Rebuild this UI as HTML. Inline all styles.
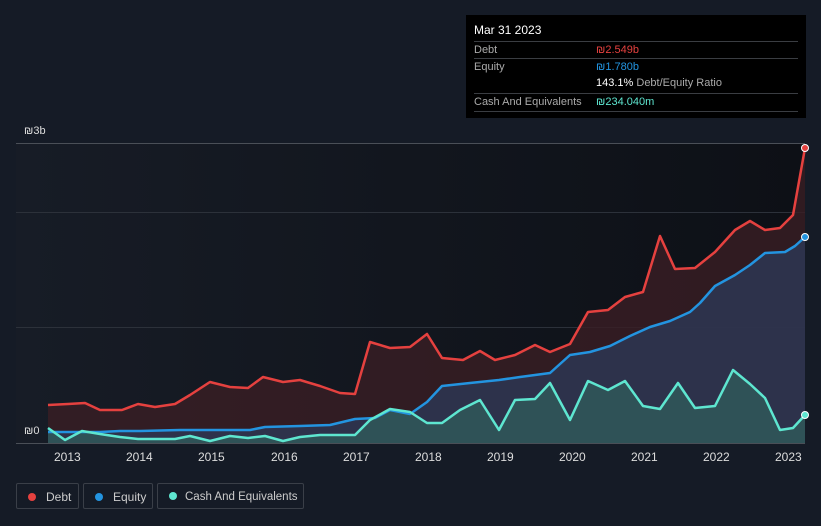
<!DOCTYPE html><html><head><style>
html,body{margin:0;width:821px;height:526px;overflow:hidden}
body{background:#151b26;font-family:"Liberation Sans",sans-serif;position:relative}
.tt{position:absolute;left:466px;top:15px;width:340px;height:103px;background:#000;color:#fff;font-size:11px}
.tt .r{position:absolute;left:8px;right:8px;border-top:1px solid #3a3d42;height:17px;line-height:17px;color:#aaa}
.tt .r span{position:absolute;left:122px}
.leg{position:absolute;top:483px;height:26px;border:1px solid #3a3f48;border-radius:2px;color:#ccc;font-size:12px;line-height:26px;box-sizing:border-box;white-space:nowrap}
.leg i{display:inline-block;width:8px;height:8px;border-radius:50%;margin:0 10px 0 11px}
.yr{position:absolute;top:450px;color:#ddd;font-size:12px}
</style></head><body>
<svg width="821" height="526" style="position:absolute;left:0;top:0">
<defs><linearGradient id="bg" x1="0" x2="1" y1="0" y2="0"><stop offset="0" stop-color="#171c26"/><stop offset="1" stop-color="#0d1016"/></linearGradient></defs>
<rect x="16" y="143" width="789" height="300" fill="url(#bg)"/>
<g stroke="#2c313a" stroke-width="1"><line x1="16" y1="143.5" x2="805" y2="143.5" stroke="#4a4f57"/><line x1="16" y1="212.5" x2="805" y2="212.5"/><line x1="16" y1="327.5" x2="805" y2="327.5"/><line x1="16" y1="443.5" x2="805" y2="443.5" stroke="#4a4f57"/></g>
<polygon fill="#3a1e24" opacity="0.8" points="48,443 48,405 68,404 85,403 100,410 122,410 138,404 155,407 175,404 190,395 210,382 230,387 248,388 263,377 283,382 300,380 320,386 340,393 355,394 370,342 390,348 410,347 427,334 442,358 463,360 480,351 495,360 515,355 535,345 550,352 570,344 588,312 608,310 625,297 643,292 660,236 675,269 695,268 715,252 735,230 750,221 765,230 780,228 793,215 805,148 805,443"/>
<polygon fill="#2d3550" opacity="0.9" points="48,443 48,432 100,432 120,431 140,431 180,430 220,430 250,430 265,427 300,426 330,425 355,419 375,418 390,410 410,414 427,402 442,386 470,383 499,380 520,377 550,373 570,355 590,352 610,346 630,336 650,327 670,321 690,312 700,303 715,286 735,275 750,265 765,253 785,252 795,246 805,237 805,443"/>
<polygon fill="#2f5a5a" opacity="0.8" points="48,443 48,428 65,440 82,431 100,434 120,437 138,439 160,439 175,439 190,436 210,441 230,436 248,438 265,436 283,441 300,437 320,435 355,435 370,420 390,409 410,412 427,423 442,423 460,410 480,400 499,430 515,400 535,399 550,383 570,420 588,381 608,390 625,381 643,406 660,409 678,383 695,408 715,406 733,370 750,384 765,398 780,430 793,428 805,415 805,443"/>
<g fill="none" stroke-width="2.5" stroke-linejoin="round">
<polyline stroke="#e5413f" points="48,405 68,404 85,403 100,410 122,410 138,404 155,407 175,404 190,395 210,382 230,387 248,388 263,377 283,382 300,380 320,386 340,393 355,394 370,342 390,348 410,347 427,334 442,358 463,360 480,351 495,360 515,355 535,345 550,352 570,344 588,312 608,310 625,297 643,292 660,236 675,269 695,268 715,252 735,230 750,221 765,230 780,228 793,215 805,148"/>
<polyline stroke="#2394e0" points="48,432 100,432 120,431 140,431 180,430 220,430 250,430 265,427 300,426 330,425 355,419 375,418 390,410 410,414 427,402 442,386 470,383 499,380 520,377 550,373 570,355 590,352 610,346 630,336 650,327 670,321 690,312 700,303 715,286 735,275 750,265 765,253 785,252 795,246 805,237"/>
<polyline stroke="#5ee6d0" points="48,428 65,440 82,431 100,434 120,437 138,439 160,439 175,439 190,436 210,441 230,436 248,438 265,436 283,441 300,437 320,435 355,435 370,420 390,409 410,412 427,423 442,423 460,410 480,400 499,430 515,400 535,399 550,383 570,420 588,381 608,390 625,381 643,406 660,409 678,383 695,408 715,406 733,370 750,384 765,398 780,430 793,428 805,415"/>
</g>
<circle cx="805" cy="148" r="3.5" fill="#e5413f" stroke="#fff" stroke-width="1"/>
<circle cx="805" cy="237" r="3.5" fill="#2394e0" stroke="#fff" stroke-width="1"/>
<circle cx="805" cy="415" r="3.5" fill="#5ee6d0" stroke="#fff" stroke-width="1"/>
</svg>
<div style="position:absolute;left:24px;top:125px;color:#ddd;font-size:11px">₪3b</div>
<div style="position:absolute;left:24px;top:425px;color:#ddd;font-size:11px">₪0</div>
<div class="yr" style="left:54px">2013</div><div class="yr" style="left:126px">2014</div><div class="yr" style="left:198px">2015</div><div class="yr" style="left:271px">2016</div><div class="yr" style="left:343px">2017</div><div class="yr" style="left:415px">2018</div><div class="yr" style="left:487px">2019</div><div class="yr" style="left:559px">2020</div><div class="yr" style="left:631px">2021</div><div class="yr" style="left:703px">2022</div><div class="yr" style="left:775px">2023</div>
<div class="tt">
<div style="position:absolute;left:8px;top:8px;font-size:12px">Mar 31 2023</div>
<div class="r" style="top:26px">Debt<span style="color:#e5413f">₪2.549b</span></div>
<div class="r" style="top:43px">Equity<span style="color:#2394e0">₪1.780b</span></div>
<div class="r" style="top:60px;border-top:none"><span style="color:#fff">143.1% <span style="position:static;color:#aaa">Debt/Equity Ratio</span></span></div>
<div class="r" style="top:78px">Cash And Equivalents<span style="color:#5ee6d0">₪234.040m</span></div>
<div class="r" style="top:96px;height:0"></div>
</div>
<div class="leg" style="left:16px;width:63px"><i style="background:#e5413f"></i>Debt</div>
<div class="leg" style="left:83px;width:70px"><i style="background:#2394e0"></i>Equity</div>
<div class="leg" style="left:157px;width:147px;font-size:11.5px"><i style="background:#5ee6d0;margin-right:8px"></i>Cash And Equivalents</div>
</body></html>
